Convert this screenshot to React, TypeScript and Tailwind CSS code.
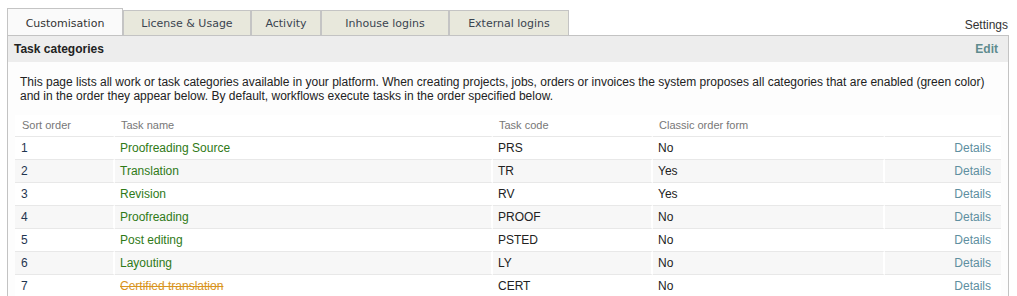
import React from "react";

const tabs = [
  { label: "Customisation", w: "w-[116px]", active: true },
  { label: "License & Usage", w: "w-[128px]", active: false },
  { label: "Activity", w: "w-[70px]", active: false },
  { label: "Inhouse logins", w: "w-[128px]", active: false },
  { label: "External logins", w: "w-[120px]", active: false },
];

const rows = [
  { n: "1", name: "Proofreading Source", code: "PRS", classic: "No", on: true },
  { n: "2", name: "Translation", code: "TR", classic: "Yes", on: true },
  { n: "3", name: "Revision", code: "RV", classic: "Yes", on: true },
  { n: "4", name: "Proofreading", code: "PROOF", classic: "No", on: true },
  { n: "5", name: "Post editing", code: "PSTED", classic: "No", on: true },
  { n: "6", name: "Layouting", code: "LY", classic: "No", on: true },
  { n: "7", name: "Certified translation", code: "CERT", classic: "No", on: false },
];

export default function App() {
  return (
    <div className="min-h-[296px] bg-white px-[7px] pr-[8px] pt-[8px] font-['Liberation_Sans',Arial,sans-serif] text-[#222]">
      <div className="flex items-end">
        {tabs.map((t) =>
          t.active ? (
            <div
              key={t.label}
              className={`${t.w} flex h-[27px] items-center justify-center border border-b-0 border-[#c4c4c4] bg-[#fafafa] pt-[4px] font-['DejaVu_Sans',Verdana,sans-serif] text-[11px] text-[#333]`}
            >
              {t.label}
            </div>
          ) : (
            <div
              key={t.label}
              className={`${t.w} flex h-[25px] items-center justify-center border border-b-0 border-[#c4c4c4] bg-[#e8e8dc] pt-[2px] font-['DejaVu_Sans',Verdana,sans-serif] text-[11px] text-[#3a4450]`}
            >
              {t.label}
            </div>
          )
        )}
        <div className="ml-auto pb-[3px] pr-[1px] text-[12px] leading-[14px] text-[#333]">Settings</div>
      </div>
      <div className="border border-b-0 border-[#c3c3c3]">
        <div className="flex h-[26px] items-center justify-between bg-[#ededed] pl-[6px] pr-[10px] text-[12px] font-bold">
          <span className="text-[#222]">Task categories</span>
          <span className="text-[#5f8b8e]">Edit</span>
        </div>
        <div className="bg-[#fdfdfd] px-[7px] pb-[20px]">
          <p className="px-[5px] pt-[13px] text-[12px] leading-[14px] text-[#222]">
            This page lists all work or task categories available in your platform. When creating projects, jobs, orders or invoices the system proposes all categories that are enabled (green color)
            <br />
            and in the order they appear below. By default, workflows execute tasks in the order specified below.
          </p>
          <table className="mt-[12px] w-full border-separate border-spacing-0 bg-white text-[12px]">
            <thead>
              <tr className="text-left text-[11px] font-normal text-[#777]">
                <th className="h-[22px] w-[100px] border-b border-r-2 border-b-[#e8e8e8] border-r-white pl-[7px] font-normal">Sort order</th>
                <th className="w-[378px] border-b border-r-2 border-b-[#e8e8e8] border-r-white pl-[6px] font-normal">Task name</th>
                <th className="w-[160px] border-b border-r-2 border-b-[#e8e8e8] border-r-white pl-[6px] font-normal">Task code</th>
                <th className="w-[232px] border-b border-r-2 border-b-[#e8e8e8] border-r-white pl-[6px] font-normal">Classic order form</th>
                <th className="border-b border-b-[#e8e8e8] font-normal"></th>
              </tr>
            </thead>
            <tbody>
              {rows.map((r, i) => (
                <tr key={r.n} className={i % 2 === 1 ? "bg-[#f7f7f7]" : "bg-white"}>
                  <td className="h-[23px] border-b border-r-2 border-b-[#e8e8e8] border-r-white pl-[6px] text-[#1f3550]">{r.n}</td>
                  <td className="border-b border-r-2 border-b-[#e8e8e8] border-r-white pl-[5px]">
                    {r.on ? (
                      <span className="text-[#2f7a17]">{r.name}</span>
                    ) : (
                      <span className="text-[#d8941e] line-through">{r.name}</span>
                    )}
                  </td>
                  <td className="border-b border-r-2 border-b-[#e8e8e8] border-r-white pl-[5px] text-[#222]">{r.code}</td>
                  <td className="border-b border-r-2 border-b-[#e8e8e8] border-r-white pl-[5px] text-[#222]">{r.classic}</td>
                  <td className="border-b border-b-[#e8e8e8] pr-[10px] text-right text-[#5e8fa0]">Details</td>
                </tr>
              ))}
            </tbody>
          </table>
        </div>
      </div>
    </div>
  );
}
